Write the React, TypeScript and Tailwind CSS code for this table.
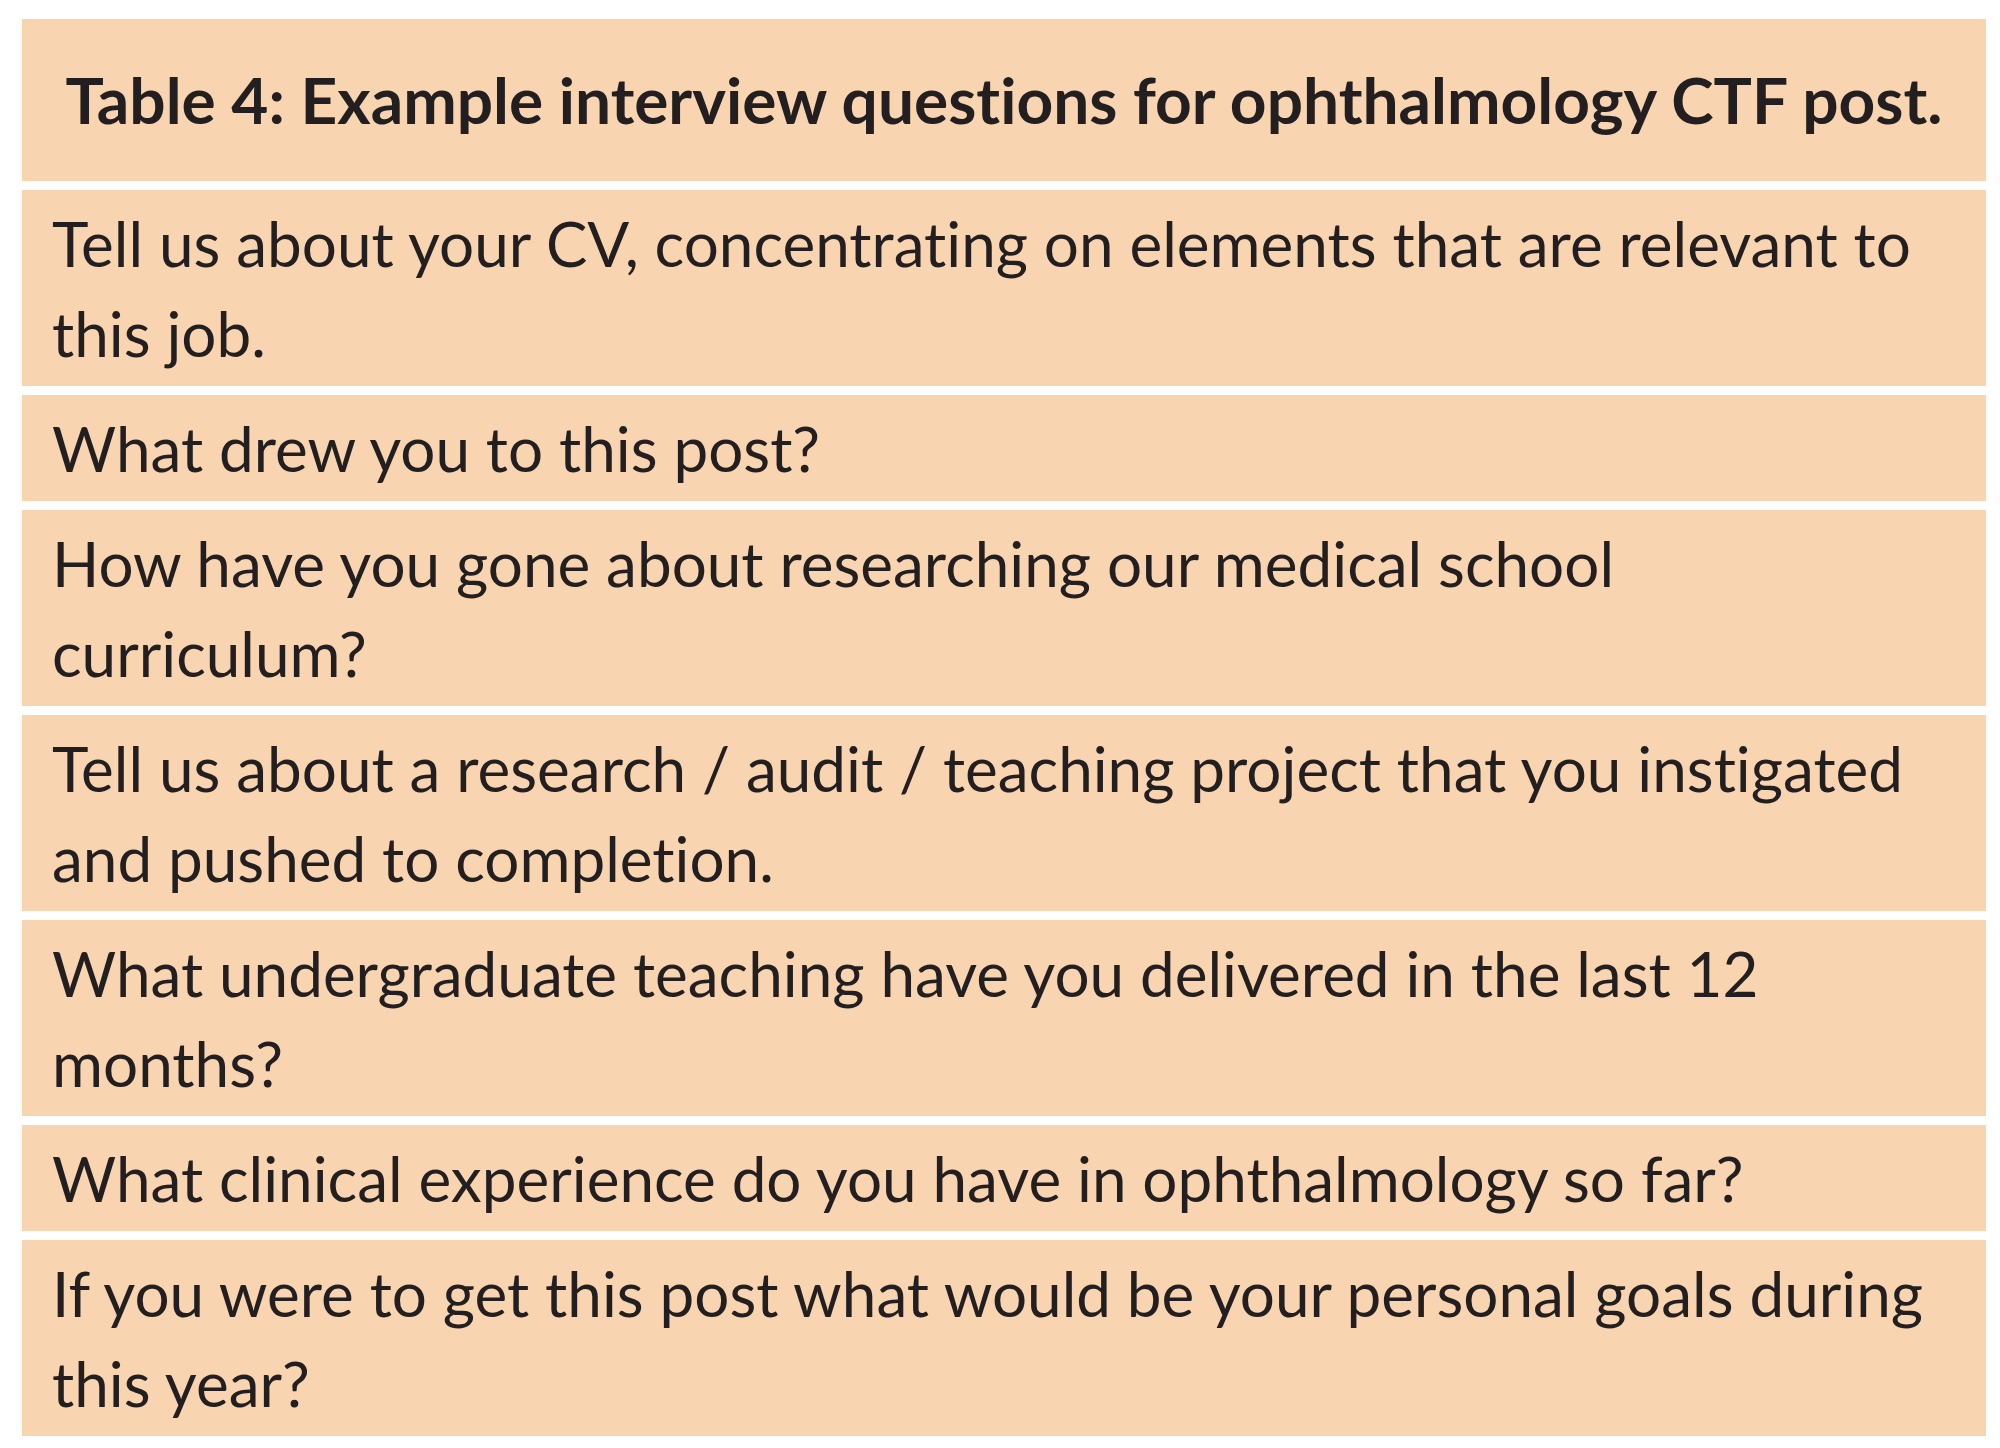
const questions: string[][] = [
  ["Tell us about your CV, concentrating on elements that are relevant to", "this job."],
  ["What drew you to this post?"],
  ["How have you gone about researching our medical school", "curriculum?"],
  ["Tell us about a research / audit / teaching project that you instigated", "and pushed to completion."],
  ["What undergraduate teaching have you delivered in the last 12", "months?"],
  ["What clinical experience do you have in ophthalmology so far?"],
  ["If you were to get this post what would be your personal goals during", "this year?"],
]

export default function App() {
  return (
    <div className="min-h-screen bg-white pl-[22px] pt-[19px] font-['Lato',sans-serif] text-[#231f20] [font-variant-ligatures:none]">
      <div className="flex w-[1964px] flex-col gap-[9px]">
        {/* Header */}
        <div className="flex h-[162px] items-center justify-center bg-[#f8d5b0]">
          <h1 className="text-[64px] font-bold leading-none">
            Table 4: Example interview questions for ophthalmology CTF post.
          </h1>
        </div>

        {questions.map((lines, i) => (
          <div key={i} className="bg-[#f8d5b0] px-[30px] py-[8px]">
            {lines.map((line) => (
              <p key={line} className="whitespace-nowrap text-[62px] leading-[90px]">
                {line}
              </p>
            ))}
          </div>
        ))}
      </div>
    </div>
  )
}
